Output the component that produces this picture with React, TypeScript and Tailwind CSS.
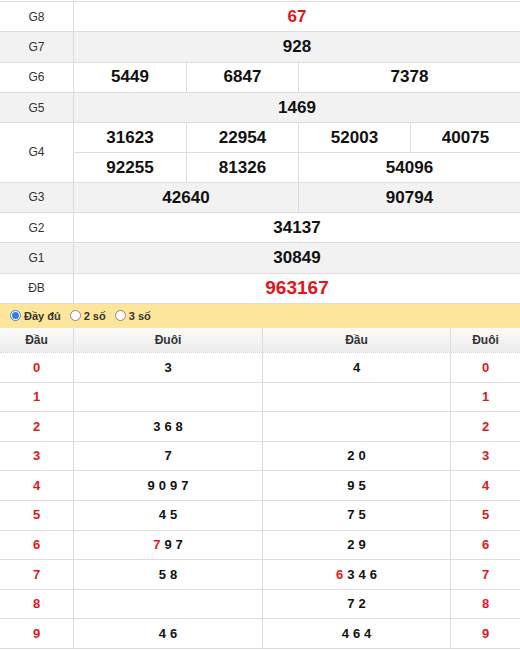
const RED = "text-[#e3151a]";

type Prize = { label: string; rows: { values: string[]; spans?: number[] }[]; red?: boolean; big?: boolean };

const prizes: Prize[] = [
  { label: "G8", rows: [{ values: ["67"] }], red: true },
  { label: "G7", rows: [{ values: ["928"] }] },
  { label: "G6", rows: [{ values: ["5449", "6847", "7378"], spans: [1, 1, 2] }] },
  { label: "G5", rows: [{ values: ["1469"] }] },
  {
    label: "G4",
    rows: [
      { values: ["31623", "22954", "52003", "40075"], spans: [1, 1, 1, 1] },
      { values: ["92255", "81326", "54096"], spans: [1, 1, 2] },
    ],
  },
  { label: "G3", rows: [{ values: ["42640", "90794"], spans: [2, 2] }] },
  { label: "G2", rows: [{ values: ["34137"] }] },
  { label: "G1", rows: [{ values: ["30849"] }] },
  { label: "ĐB", rows: [{ values: ["963167"] }], red: true, big: true },
];

// đầu -> đuôi list, and đuôi -> đầu list
const loto: { head: string; tails: { d: string; red?: boolean }[]; heads: { d: string; red?: boolean }[] }[] = [
  { head: "0", tails: [{ d: "3" }], heads: [{ d: "4" }] },
  { head: "1", tails: [], heads: [] },
  { head: "2", tails: [{ d: "3" }, { d: "6" }, { d: "8" }], heads: [] },
  { head: "3", tails: [{ d: "7" }], heads: [{ d: "2" }, { d: "0" }] },
  { head: "4", tails: [{ d: "9" }, { d: "0" }, { d: "9" }, { d: "7" }], heads: [{ d: "9" }, { d: "5" }] },
  { head: "5", tails: [{ d: "4" }, { d: "5" }], heads: [{ d: "7" }, { d: "5" }] },
  { head: "6", tails: [{ d: "7", red: true }, { d: "9" }, { d: "7" }], heads: [{ d: "2" }, { d: "9" }] },
  { head: "7", tails: [{ d: "5" }, { d: "8" }], heads: [{ d: "6", red: true }, { d: "3" }, { d: "4" }, { d: "6" }] },
  { head: "8", tails: [], heads: [{ d: "7" }, { d: "2" }] },
  { head: "9", tails: [{ d: "4" }, { d: "6" }], heads: [{ d: "4" }, { d: "6" }, { d: "4" }] },
];

function Digits({ list }: { list: { d: string; red?: boolean }[] }) {
  return (
    <span className="flex gap-[4px]">
      {list.map((x, i) => (
        <span key={i} className={x.red ? RED : "text-[#111]"}>
          {x.d}
        </span>
      ))}
    </span>
  );
}

function Radio({ checked, label }: { checked?: boolean; label: string }) {
  return (
    <label className="flex items-center gap-[3px]">
      <span
        className={
          checked
            ? "flex h-[11px] w-[11px] items-center justify-center rounded-full border border-[#3b82d6] bg-white"
            : "h-[11px] w-[11px] rounded-full border border-[#888] bg-white"
        }
      >
        {checked && <span className="h-[7px] w-[7px] rounded-full bg-[#2f7fe0]" />}
      </span>
      <span>{label}</span>
    </label>
  );
}

export default function App() {
  return (
    <div className="w-[520px] bg-white pt-px font-['Liberation_Sans',Arial,sans-serif]">
      <div className="border-t border-[#ddd]">
        {prizes.map((p, i) => (
          <div key={p.label} className={"flex border-b border-[#ddd] " + (i % 2 === 1 ? "bg-[#f2f2f2]" : "bg-white")}>
            <div className="flex w-[74px] shrink-0 items-center justify-center border-r border-[#ddd] text-[12px] text-[#333]">
              {p.label}
            </div>
            <div className="flex flex-1 flex-col">
              {p.rows.map((r, ri) => (
                <div
                  key={ri}
                  className={"grid h-[29.3px] grid-cols-[112px_112px_112px_1fr] " + (ri > 0 ? "border-t border-[#ddd]" : "")}
                >
                  {r.values.map((v, vi) => {
                    const span = r.spans ? r.spans[vi] : 4;
                    return (
                      <div
                        key={vi}
                        className={
                          "flex items-center justify-center font-bold " +
                          (span === 4 ? "col-span-4 " : span === 2 ? "col-span-2 " : "") +
                          (vi > 0 ? "border-l border-[#ddd] " : "") +
                          (p.red ? RED + " " : "text-[#111] ") +
                          (p.big ? "text-[19px]" : "text-[17px]")
                        }
                      >
                        {v}
                      </div>
                    );
                  })}
                </div>
              ))}
            </div>
          </div>
        ))}
      </div>

      <div className="flex h-[24px] items-center gap-[9px] bg-[#fde59b] pl-[10px] text-[11px] font-bold text-[#333]">
        <Radio checked label="Đầy đủ" />
        <Radio label="2 số" />
        <Radio label="3 số" />
      </div>

      <div className="grid h-[25px] grid-cols-[74px_189px_188px_1fr] border-b border-dotted border-[#d4d4d4] bg-gradient-to-b from-[#fbfbfb] to-[#ececec] text-[12px] font-bold text-[#333]">
        <div className="flex items-center justify-center border-r border-[#ddd]">Đầu</div>
        <div className="flex items-center justify-center border-r border-[#ddd]">Đuôi</div>
        <div className="flex items-center justify-center border-r border-[#ddd]">Đầu</div>
        <div className="flex items-center justify-center">Đuôi</div>
      </div>

      {loto.map((r) => (
        <div
          key={r.head}
          className="grid h-[29.6px] grid-cols-[74px_189px_188px_1fr] border-b border-[#ddd] text-[13px] font-bold"
        >
          <div className={"flex items-center justify-center border-r border-[#ddd] " + RED}>{r.head}</div>
          <div className="flex items-center justify-center border-r border-[#ddd]">
            <Digits list={r.tails} />
          </div>
          <div className="flex items-center justify-center border-r border-[#ddd]">
            <Digits list={r.heads} />
          </div>
          <div className={"flex items-center justify-center " + RED}>{r.head}</div>
        </div>
      ))}
    </div>
  );
}
